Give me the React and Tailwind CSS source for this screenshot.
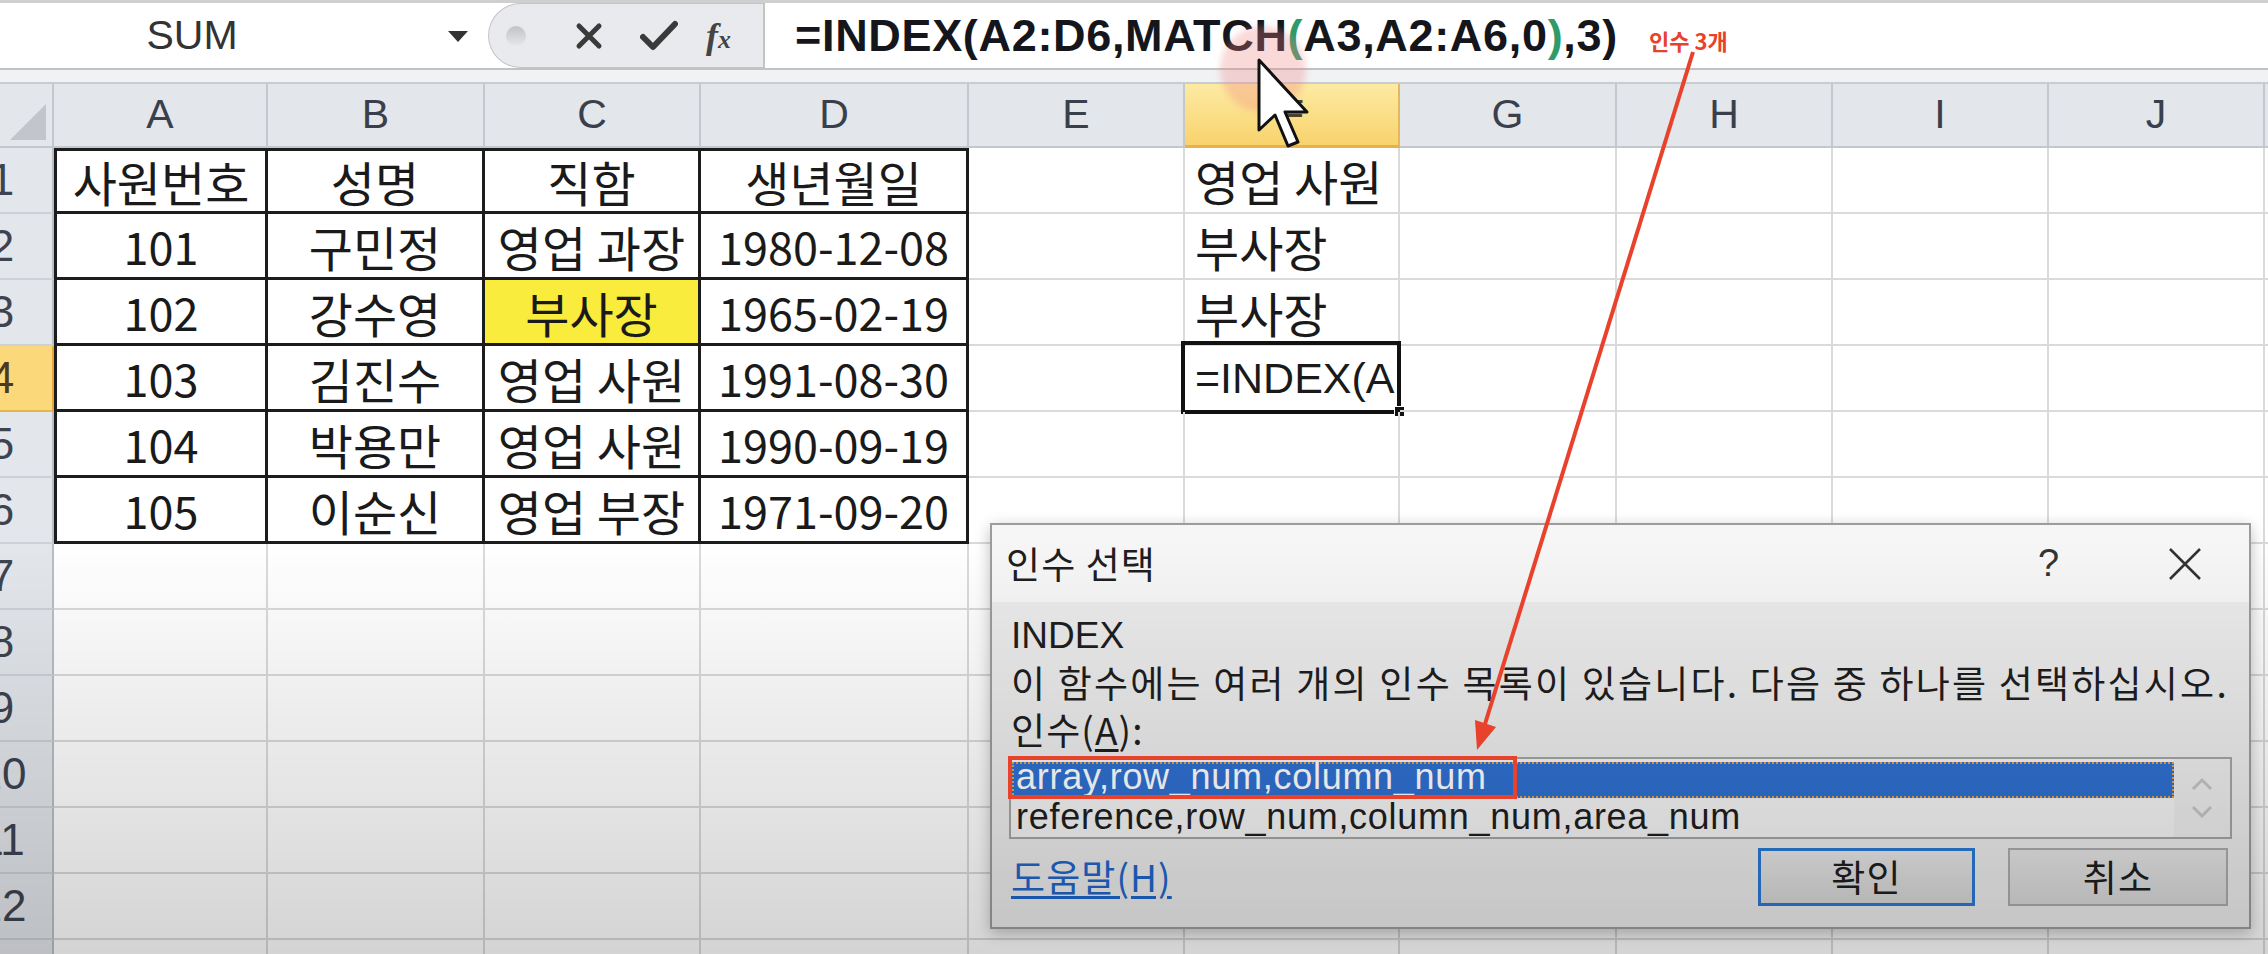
import React from "react";

const COLS = [
  { key: "A", w: "w-[214px]" },
  { key: "B", w: "w-[217px]" },
  { key: "C", w: "w-[216px]" },
  { key: "D", w: "w-[268px]" },
  { key: "E", w: "w-[216px]" },
  { key: "F", w: "w-[215px]" },
  { key: "G", w: "w-[217px]" },
  { key: "H", w: "w-[216px]" },
  { key: "I", w: "w-[216px]" },
  { key: "J", w: "w-[216px]" },
];

const DATA = [
  ["사원번호", "성명", "직함", "생년월일", "", "영업 사원"],
  ["101", "구민정", "영업 과장", "1980-12-08", "", "부사장"],
  ["102", "강수영", "부사장", "1965-02-19", "", "부사장"],
  ["103", "김진수", "영업 사원", "1991-08-30", "", "=INDEX(A"],
  ["104", "박용만", "영업 사원", "1990-09-19", "", ""],
  ["105", "이순신", "영업 부장", "1971-09-20", "", ""],
];

function FormulaBar() {
  return (
    <div className="h-[70px] flex bg-white border-t-[3px] border-b-2 border-t-[#cfcfcf] border-b-[#c2c2c2]">
      <div className="w-[488px] shrink-0 flex items-center">
        <div className="w-[384px] text-center text-[41px] text-[#333] font-['Liberation_Sans',sans-serif]">SUM</div>
        <svg className="ml-[62px]" width="24" height="14" viewBox="0 0 24 14">
          <polygon points="2,2 22,2 12,13" fill="#333" />
        </svg>
      </div>
      <div className="w-[277px] shrink-0 flex items-center rounded-l-[34px] border border-r-2 border-[#c4c4c4] bg-[#e9eaed] pl-[17px]">
        <div className="w-[20px] h-[20px] rounded-full bg-linear-to-b from-[#c2c3c6] to-[#e6e7e9]" />
        <svg className="ml-[48px]" width="30" height="30" viewBox="0 0 30 30">
          <path d="M5 5 L25 25 M25 5 L5 25" stroke="#3a3a3a" strokeWidth="5" strokeLinecap="round" />
        </svg>
        <svg className="ml-[36px]" width="38" height="32" viewBox="0 0 38 32">
          <path d="M3 17 L13 27 L35 4" stroke="#3a3a3a" strokeWidth="6" fill="none" strokeLinecap="round" strokeLinejoin="round" />
        </svg>
        <div className="ml-[28px] w-[44px] italic text-[#444] font-['Liberation_Serif',serif] leading-none">
          <span className="text-[36px] font-bold">f</span>
          <span className="text-[26px] font-bold">x</span>
        </div>
      </div>
      <div className="flex-1 flex items-center pl-[30px] text-[45px] tracking-[0.015em] font-bold text-[#14161c] font-['Liberation_Sans',sans-serif] whitespace-nowrap">
        =INDEX(A2:D6,MATCH<span className="text-[#2f9a6a]">(</span>A3,A2:A6,0<span className="text-[#2f9a6a]">)</span>,3)
      </div>
    </div>
  );
}

function ColumnHeader() {
  return (
    <div className="flex h-[64px] bg-[#e3e6eb]">
      <div className="w-[54px] shrink-0 h-full border-r-2 border-b-2 border-[#c3c7ce] flex items-end justify-end p-[6px]">
        <svg width="36" height="36" viewBox="0 0 36 36">
          <polygon points="36,0 36,36 0,36" fill="#c2c6cc" />
        </svg>
      </div>
      {COLS.map((c) => (
        <div
          key={c.key}
          className={
            c.key === "F"
              ? "w-[215px] shrink-0 h-full flex items-center justify-center border-r-2 border-b-[3px] border-r-[#e3b85a] border-b-[#eab04a] bg-linear-to-b from-[#fdeaa2] to-[#f8d36c] text-[41px] text-[#4a4030] font-['Liberation_Sans',sans-serif]"
              : c.w + " shrink-0 h-full flex items-center justify-center border-r-2 border-b-2 border-[#c3c7ce] text-[41px] text-[#3a404b] font-['Liberation_Sans',sans-serif]"
          }
        >
          {c.key}
        </div>
      ))}
      <div className="flex-1 border-b-2 border-[#c3c7ce]" />
    </div>
  );
}

function RowHeader({ n }) {
  return (
    <div
      className={
        n === 4
          ? "w-[54px] shrink-0 h-full flex items-center overflow-hidden border-r-2 border-b-2 border-r-[#e2a83c] border-b-[#e8b44c] bg-[#fbd87a] text-[#4a3a20]"
          : "w-[54px] shrink-0 h-full flex items-center overflow-hidden border-r-2 border-b-2 border-r-[#b9bec6] border-b-[#cdd1d7] bg-[#e3e6eb] text-[#3d4450]"
      }
    >
      <div className="w-[60px] -ml-[28px] shrink-0 text-center text-[44px] font-['Liberation_Sans',sans-serif]">{n}</div>
    </div>
  );
}

function Cell({ row, col, value }) {
  const inTable = row <= 6 && col <= 3;
  const yellow = row === 3 && col === 2;
  const active = row === 4 && col === 5;
  const numeric = /^[0-9-]+$/.test(value);
  let cls = "relative shrink-0 h-full flex items-center whitespace-nowrap " + COLS[col].w;
  cls += numeric ? " text-[45px]" : " text-[48px]";
  if (inTable) {
    cls += " justify-center border-r-[3px] border-b-[3px] border-[#1c1c1c]";
    if (col === 0) cls += " border-l-[3px]";
    if (row === 1) cls += " border-t-[3px]";
  } else {
    cls += " justify-start pl-[10px] border-r-2 border-b-2 border-[#dadada]";
  }
  if (yellow) cls += " bg-[#f9ec3c]";
  return (
    <div className={cls}>
      {active ? (
        <>
          <span className="font-['Liberation_Sans',sans-serif] text-[43px] text-[#1a1a1a]">{value}</span>
          <div className="absolute -left-[4px] -top-[5px] -right-[3px] -bottom-[4px] border-[4px] border-[#111]" />
          <div className="absolute -right-[7px] -bottom-[7px] w-[11px] h-[11px] bg-[#111] border border-white" />
        </>
      ) : (
        value
      )}
    </div>
  );
}

function Sheet() {
  const rows = [];
  for (let r = 1; r <= 13; r++) rows.push(r);
  return (
    <div>
      <ColumnHeader />
      {rows.map((r) => (
        <div key={r} className="flex h-[66px] bg-white">
          <RowHeader n={r} />
          {COLS.map((c, ci) => (
            <Cell key={c.key} row={r} col={ci} value={(DATA[r - 1] && DATA[r - 1][ci]) || ""} />
          ))}
          <div className="flex-1 border-b-2 border-[#dadada]" />
        </div>
      ))}
    </div>
  );
}

function ArgDialog() {
  return (
    <div className="absolute left-[990px] top-[523px] w-[1261px] h-[406px] z-10 flex flex-col border-2 border-[#9c9c9c] bg-[#ebebeb] shadow-[0_4px_14px_rgba(0,0,0,0.25)] text-[37px] tracking-[0.03em] text-[#1e1e1e]">
      <div className="h-[77px] shrink-0 flex items-center bg-[#f6f6f6]">
        <div className="pl-[14px] flex-1">인수 선택</div>
        <div className="w-[70px] text-center font-['Liberation_Sans',sans-serif] text-[38px] text-[#333]">?</div>
        <div className="ml-[66px] w-[70px] flex justify-center">
          <svg width="38" height="38" viewBox="0 0 38 38">
            <path d="M4 4 L34 34 M34 4 L4 34" stroke="#333" strokeWidth="2.5" />
          </svg>
        </div>
        <div className="w-[29px]" />
      </div>
      <div className="flex-1 flex flex-col pl-[19px] pr-[17px] pt-[10px]">
        <div className="leading-[47px] font-['Liberation_Sans',sans-serif] tracking-normal">INDEX</div>
        <div className="leading-[47px] whitespace-nowrap tracking-[0.06em]">이 함수에는 여러 개의 인수 목록이 있습니다. 다음 중 하나를 선택하십시오.</div>
        <div className="leading-[47px]">
          인수(<span className="underline underline-offset-4">A</span>):
        </div>
        <div className="mt-[4px] -ml-[2px] h-[82px] flex border-2 border-[#a4a4a4] bg-[#f3f3f3]">
          <div className="flex-1 flex flex-col pt-[3px] pl-[1px] font-['Liberation_Sans',sans-serif] text-[36px] tracking-[0.02em]">
            <div className="h-[36px] flex items-center bg-[#2f6fd0] text-white border-2 border-dotted border-[#e8a040] pl-[2px] pb-[6px] leading-none">
              array,row_num,column_num
            </div>
            <div className="h-[38px] flex items-center pl-[4px] leading-none">reference,row_num,column_num,area_num</div>
          </div>
          <div className="w-[56px] flex flex-col items-center justify-center gap-[14px] bg-[#ececec]">
            <svg width="22" height="14" viewBox="0 0 22 14">
              <path d="M2 12 L11 3 L20 12" stroke="#c4c4c4" strokeWidth="3" fill="none" />
            </svg>
            <svg width="22" height="14" viewBox="0 0 22 14">
              <path d="M2 2 L11 11 L20 2" stroke="#c4c4c4" strokeWidth="3" fill="none" />
            </svg>
          </div>
        </div>
        <div className="mt-[9px] flex items-center pr-[4px]">
          <div className="flex-1 text-[#1f65c8] underline underline-offset-4">도움말(H)</div>
          <div className="w-[217px] h-[58px] flex items-center justify-center border-[3px] border-[#2a78d4] bg-linear-to-b from-[#e6e6e6] to-[#d6d6d6]">
            확인
          </div>
          <div className="ml-[33px] w-[220px] h-[58px] flex items-center justify-center border-2 border-[#ababab] bg-linear-to-b from-[#e4e4e4] to-[#d8d8d8]">
            취소
          </div>
        </div>
      </div>
    </div>
  );
}

function Annotations() {
  return (
    <>
      <div className="absolute left-[1220px] top-[26px] w-[86px] h-[86px] rounded-full bg-[#ee8080]/30 blur-[3px] z-30 pointer-events-none" />
      <svg className="absolute left-[1257px] top-[58px] z-30" width="56" height="92" viewBox="0 0 56 92">
        <path
          d="M2 2 L2 72 L18 57 L31 88 L41 84 L28 54 L50 54 Z"
          fill="#fff"
          stroke="#111"
          strokeWidth="3"
          strokeLinejoin="round"
        />
      </svg>
      <div className="absolute left-[1649px] top-[24px] z-40 text-[22px] font-bold text-[#e8412c]">인수 3개</div>
      <svg className="absolute left-0 top-0 z-40 pointer-events-none" width="2268" height="954" viewBox="0 0 2268 954">
        <line x1="1693" y1="52" x2="1485" y2="724" stroke="#e8412c" strokeWidth="4" />
        <polygon points="1477,750 1496,727 1475,720" fill="#e8412c" />
        <rect x="1010" y="758" width="505" height="39" fill="none" stroke="#e8412c" strokeWidth="4" />
      </svg>
    </>
  );
}

export default function App() {
  return (
    <div className="relative w-[2268px] h-[954px] overflow-hidden bg-white font-['Noto_Sans_CJK_KR',sans-serif] text-[#1a1a1a]">
      <FormulaBar />
      <div className="h-[14px] bg-[#f1f2f4] border-b-2 border-[#c9ccd1]" />
      <Sheet />
      <ArgDialog />
      <div className="absolute left-0 top-[540px] w-full h-[414px] z-20 pointer-events-none bg-linear-to-b from-black/0 to-black/[0.17]" />
      <Annotations />
    </div>
  );
}
